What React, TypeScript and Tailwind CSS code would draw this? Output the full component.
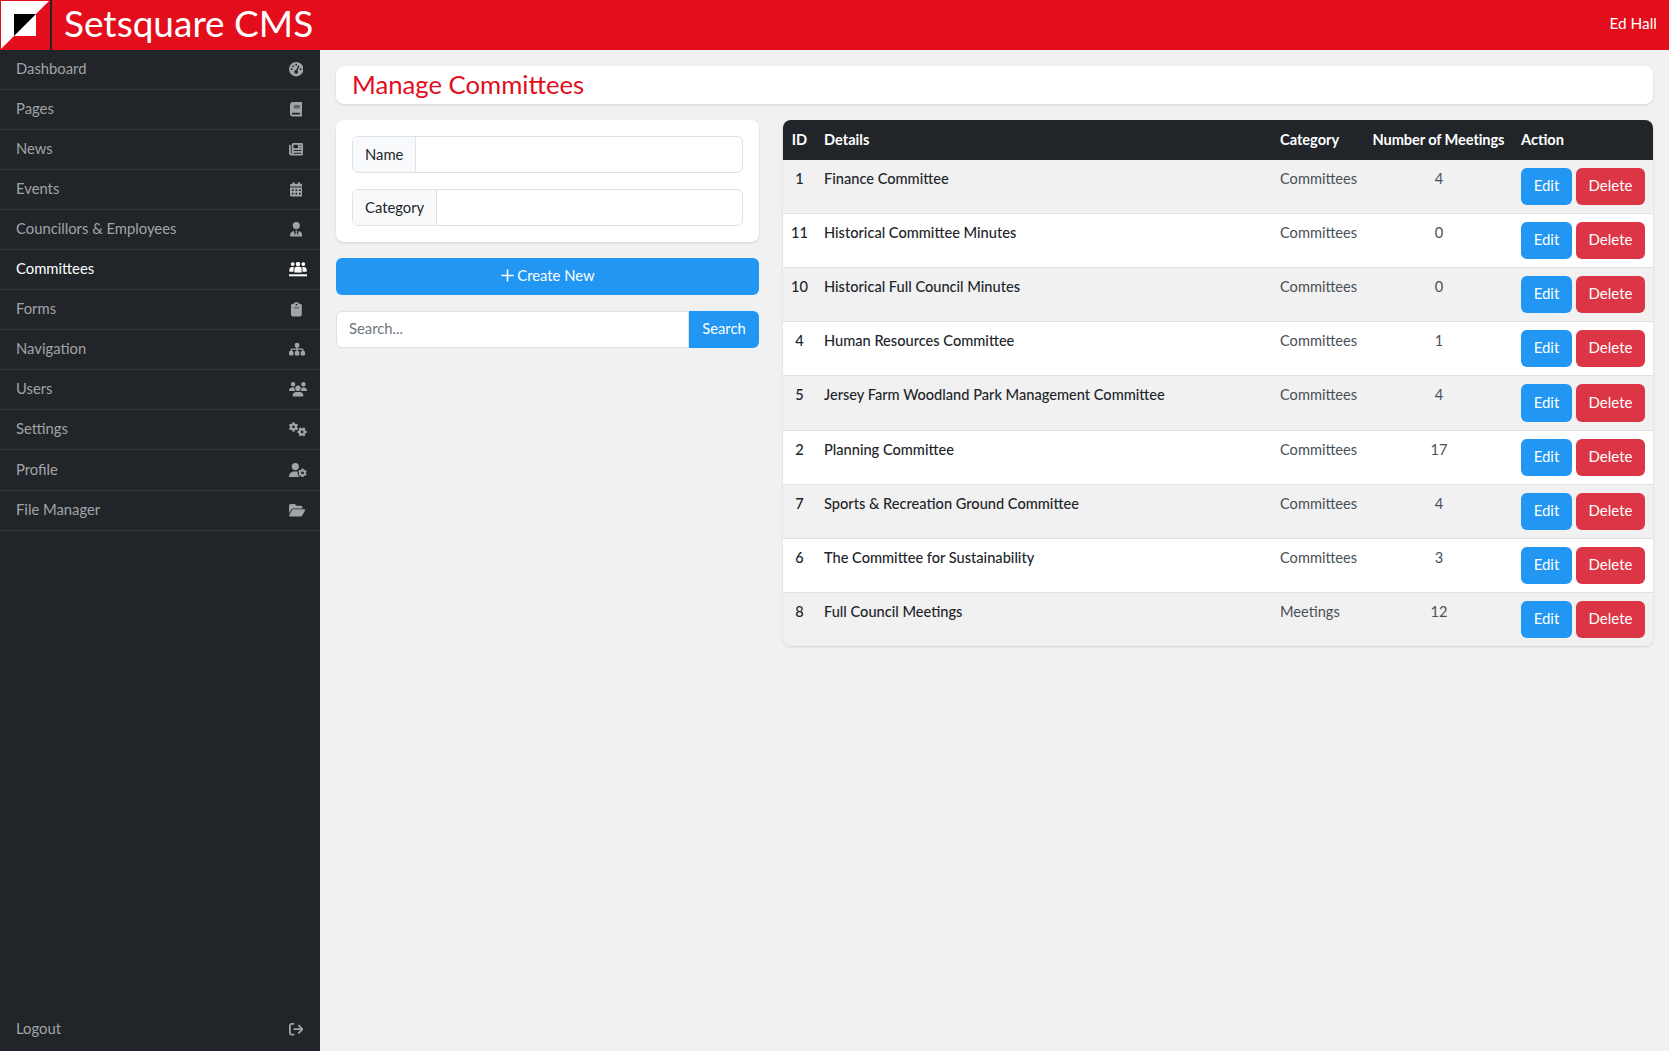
import React from 'react';
import { Plus } from 'lucide-react';
import {
  FaGaugeHigh,
  FaBook,
  FaNewspaper,
  FaCalendarDays,
  FaUserTie,
  FaUsers,
  FaClipboard,
  FaSitemap,
  FaGears,
  FaUserGear,
  FaFolderOpen,
  FaArrowRightFromBracket,
} from 'react-icons/fa6';

// three people standing on a line, the active committees icon
const CommitteesIcon = ({ className }: { className?: string }) => (
  <svg viewBox="0 0 18 14.4" fill="currentColor" className={className}>
    <circle cx="3.7" cy="2.1" r="1.9" />
    <circle cx="9" cy="2.1" r="2.2" />
    <circle cx="14.3" cy="2.1" r="1.9" />
    <path d="M0.4 9.8V7.6C0.4 5.9 1.6 4.9 3.2 4.9H4.9C4.6 5.5 4.5 6.1 4.5 6.8V9.8Z" />
    <path d="M5.4 10.4V7C5.4 5.6 6.4 4.8 7.6 4.8H10.4C11.6 4.8 12.6 5.6 12.6 7V10.4Z" />
    <path d="M17.6 9.8V7.6C17.6 5.9 16.4 4.9 14.8 4.9H13.1C13.4 5.5 13.5 6.1 13.5 6.8V9.8Z" />
    <rect x="0" y="12.3" width="18" height="2" />
  </svg>
);

const navItems = [
  { label: 'Dashboard', icon: FaGaugeHigh, w: 'w-[14.4px]' },
  { label: 'Pages', icon: FaBook, w: 'w-[12.6px]' },
  { label: 'News', icon: FaNewspaper, w: 'w-[14.4px]' },
  { label: 'Events', icon: FaCalendarDays, w: 'w-[12.6px]' },
  { label: 'Councillors & Employees', icon: FaUserTie, w: 'w-[12.6px]' },
  { label: 'Committees', icon: CommitteesIcon, w: 'w-[18px]', active: true },
  { label: 'Forms', icon: FaClipboard, w: 'w-[10.8px]' },
  { label: 'Navigation', icon: FaSitemap, w: 'w-[16.2px]' },
  { label: 'Users', icon: FaUsers, w: 'w-[18px]' },
  { label: 'Settings', icon: FaGears, w: 'w-[18px]' },
  { label: 'Profile', icon: FaUserGear, w: 'w-[18px]', tall: true },
  { label: 'File Manager', icon: FaFolderOpen, w: 'w-[16.2px]' },
];

const rows = [
  { id: 1, name: 'Finance Committee', category: 'Committees', meetings: 4 },
  { id: 11, name: 'Historical Committee Minutes', category: 'Committees', meetings: 0 },
  { id: 10, name: 'Historical Full Council Minutes', category: 'Committees', meetings: 0 },
  { id: 4, name: 'Human Resources Committee', category: 'Committees', meetings: 1 },
  { id: 5, name: 'Jersey Farm Woodland Park Management Committee', category: 'Committees', meetings: 4 },
  { id: 2, name: 'Planning Committee', category: 'Committees', meetings: 17 },
  { id: 7, name: 'Sports & Recreation Ground Committee', category: 'Committees', meetings: 4 },
  { id: 6, name: 'The Committee for Sustainability', category: 'Committees', meetings: 3 },
  { id: 8, name: 'Full Council Meetings', category: 'Meetings', meetings: 12 },
];

const Logo = () => (
  <svg width="52" height="50" viewBox="0 0 52 50" className="shrink-0 block">
    <polygon points="1,1 49,1 1,49" fill="#ffffff" />
    <rect x="14" y="14" width="22" height="22" fill="#ffffff" />
    <polygon points="14,14 36,14 14,36" fill="#000000" />
    <rect x="50" y="0" width="2" height="50" fill="#212529" />
  </svg>
);

const NavIcon = ({ icon: Icon, w }: { icon: React.ElementType; w: string }) => (
  <span className="w-[18px] flex justify-start">
    <span className="min-w-[14.4px] flex justify-center">
      <Icon className={`h-[14.4px] shrink-0 ${w}`} />
    </span>
  </span>
);

const Sidebar = () => (
  <aside className="w-[320px] shrink-0 bg-[#212529] flex flex-col justify-between text-[14.8px] text-[#a1a4a7]">
    <nav>
      {navItems.map((item) => (
        <div
          key={item.label}
          className={`flex items-center justify-between pl-4 pr-[13px] border-b border-[#32373b] ${
            item.tall ? 'h-[41px]' : 'h-10'
          } ${item.active ? 'text-white' : ''}`}
        >
          <span className="pb-0.5">{item.label}</span>
          <NavIcon icon={item.icon} w={item.w} />
        </div>
      ))}
    </nav>
    <div className="flex items-center justify-between pl-4 pr-[13px] h-10 mb-[2px]">
      <span className="pb-px">Logout</span>
      <NavIcon icon={FaArrowRightFromBracket} w="w-[14.4px]" />
    </div>
  </aside>
);

const InputGroup = ({ label }: { label: string }) => (
  <div className="flex h-[37px] rounded-md border border-[#dee2e6] overflow-hidden bg-white">
    <span className="flex items-center px-3 pb-px bg-[#f8f9fa] border-r border-[#dee2e6] text-[#212529]">{label}</span>
    <input type="text" className="flex-1 min-w-0 outline-none" />
  </div>
);

export default function App() {
  return (
    <div className="h-screen flex flex-col bg-[#f1f1f1] font-['Lato','Noto_Sans',sans-serif] text-[14.8px] overflow-hidden">
      <header className="h-[50px] shrink-0 bg-[#e30d1c] flex items-center text-white">
        <Logo />
        <span className="ml-[12px] text-[37px] leading-none -translate-y-[3px]">Setsquare CMS</span>
        <span className="ml-auto mr-3 pb-0.5 text-[15.4px]">Ed Hall</span>
      </header>
      <div className="flex-1 flex min-h-0">
        <Sidebar />
        <main className="flex-1 p-4 flex flex-col gap-4">
          <div className="h-[38px] bg-white rounded-lg shadow-sm flex items-center px-4">
            <h1 className="text-[25.7px] pb-0.5 text-[#e30d1c]">Manage Committees</h1>
          </div>
          <div className="flex gap-6 items-start">
            <div className="w-[423px] shrink-0 flex flex-col gap-4">
              <div className="bg-white rounded-lg shadow-sm p-4 flex flex-col gap-4">
                <InputGroup label="Name" />
                <InputGroup label="Category" />
              </div>
              <button className="h-[37px] pb-0.5 bg-[#2196f3] text-white rounded-md flex items-center justify-center">
                <Plus size={19} className="-ml-0.5" />
                Create New
              </button>
              <div className="flex h-[37px]">
                <input
                  type="text"
                  placeholder="Search..."
                  className="flex-1 min-w-0 px-3 pb-0.5 bg-white border border-[#dee2e6] rounded-l-md outline-none placeholder:text-[#6c757d]"
                />
                <button className="w-[70px] pb-0.5 bg-[#2196f3] text-white rounded-r-md">Search</button>
              </div>
            </div>
            <div className="flex-1 rounded-lg overflow-hidden shadow-sm">
              <table className="w-full table-fixed border-collapse text-[14.6px] leading-[21.6px]">
                <colgroup>
                  <col className="w-[33px]" />
                  <col />
                  <col className="w-[92px]" />
                  <col className="w-[149px]" />
                  <col className="w-[140px]" />
                </colgroup>
                <thead className="bg-[#212529] text-white">
                  <tr className="h-10">
                    <th className="px-2 font-bold text-center whitespace-nowrap">ID</th>
                    <th className="px-2 font-bold text-left">Details</th>
                    <th className="px-2 font-bold text-left">Category</th>
                    <th className="px-2 font-bold text-center whitespace-nowrap tracking-[-0.1px]">Number of Meetings</th>
                    <th className="px-2 font-bold text-left">Action</th>
                  </tr>
                </thead>
                <tbody>
                  {rows.map((row, i) => (
                    <tr key={row.id} className={`border-b border-[#dee2e6] last:border-b-0 ${i % 2 === 0 ? 'bg-[#f1f1f1]' : 'bg-white'}`}>
                      <td className="p-2 align-top text-center text-[#212529] font-medium">{row.id}</td>
                      <td className="p-2 align-top text-[#212529] font-medium">{row.name}</td>
                      <td className="p-2 align-top text-[#495057]">{row.category}</td>
                      <td className="p-2 pl-[9px] align-top text-center text-[#495057]">{row.meetings}</td>
                      <td className="p-2 align-top">
                        <div className="flex gap-1 text-[15px]">
                          <button className={`w-[51px] pb-px bg-[#2196f3] text-white rounded-md ${row.id === 5 ? 'h-[38px]' : 'h-[37px]'}`}>Edit</button>
                          <button className={`w-[69px] pb-px bg-[#dc3545] text-white rounded-md ${row.id === 5 ? 'h-[38px]' : 'h-[37px]'}`}>Delete</button>
                        </div>
                      </td>
                    </tr>
                  ))}
                </tbody>
              </table>
            </div>
          </div>
        </main>
      </div>
    </div>
  );
}
